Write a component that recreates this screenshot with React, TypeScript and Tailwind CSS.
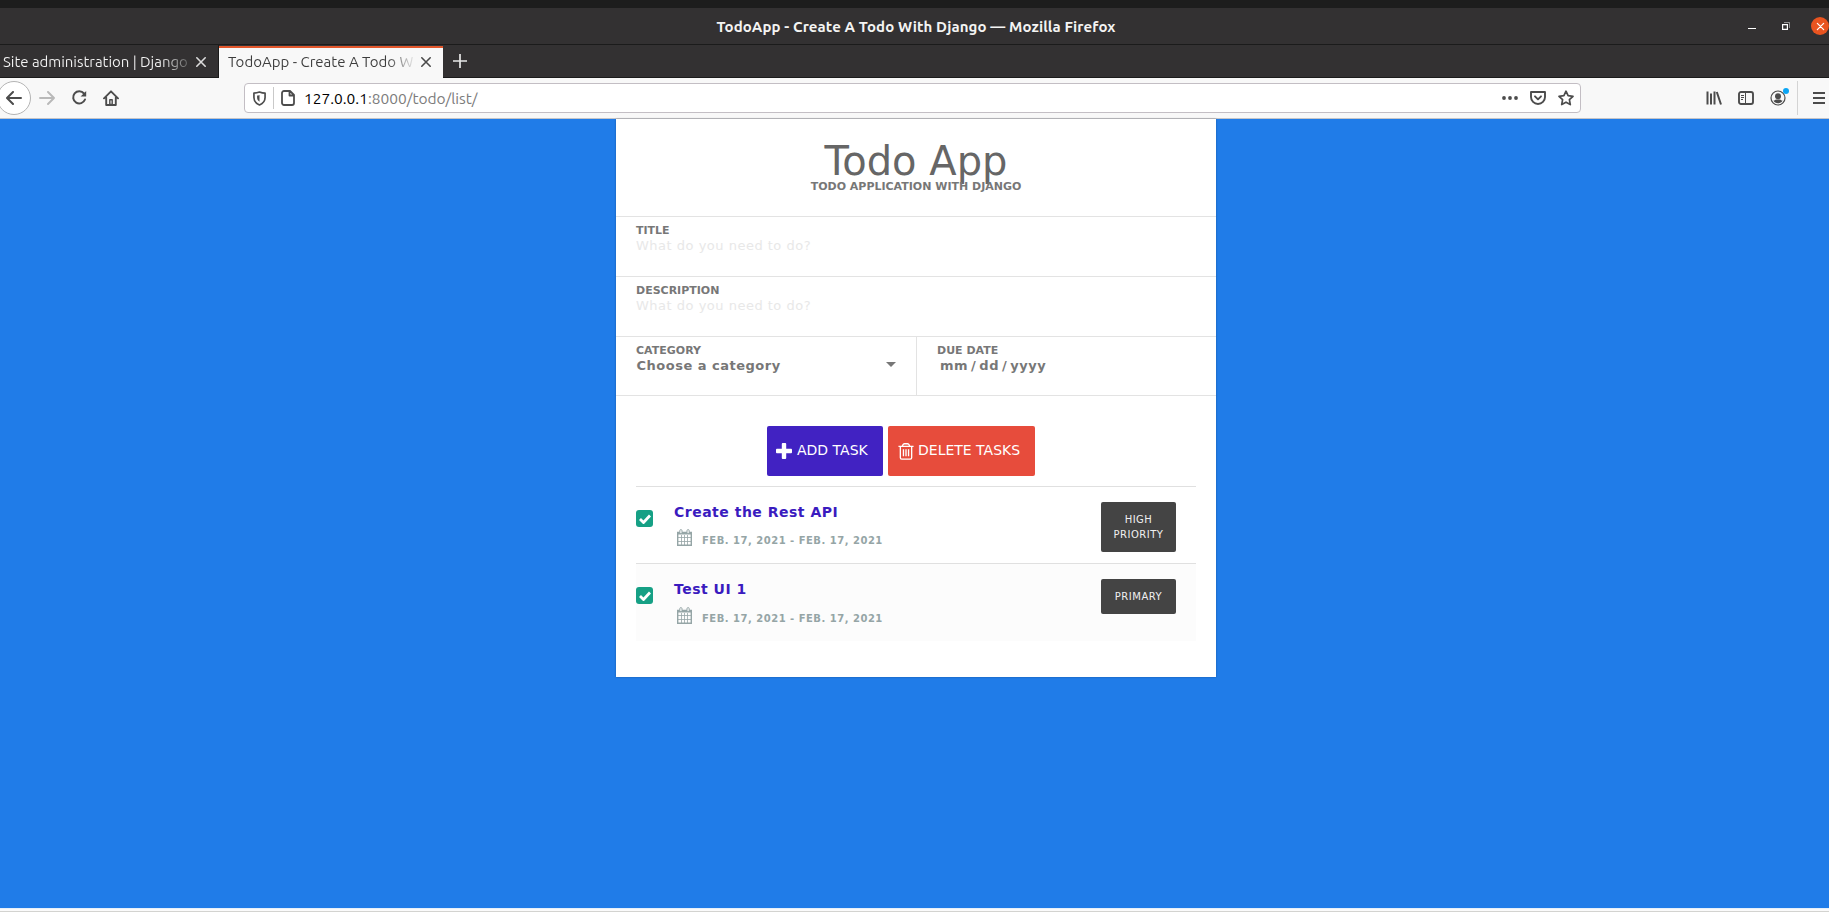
import React from 'react';

const stroke = { fill: 'none', stroke: 'currentColor' } as const;

function CloseMark({ className }: { className: string }) {
  return (
    <svg viewBox="0 0 12 12" className={className} {...stroke} strokeWidth="1.6" strokeLinecap="round">
      <path d="M1.800 1.800 10.200 10.200M10.200 1.800 1.800 10.200" />
    </svg>
  );
}

function TitleBar() {
  return (
    <header className="flex h-[37px] shrink-0 items-center border-b border-[#1b1b1b] bg-[#333132]">
      <div className="w-[150px]" />
      <h1 className="flex-1 pl-[3px] text-center text-[15px] font-bold leading-none text-[#f4f4f3]">
        <span className="inline-block whitespace-nowrap tracking-[0.1px]">TodoApp - Create A Todo With Django — Mozilla Firefox</span>
      </h1>
      <div className="flex w-[150px] items-center text-white">
        <svg viewBox="0 0 8 8" className="ml-[69px] size-2" fill="currentColor"><path d="M0 6h8v1H0z" /></svg>
        <svg viewBox="0 0 8 8" className="ml-[26px] size-2" {...stroke}>
          <path d="M.6 2.600h4.800v4.800H.6z" strokeWidth="1.200" />
          <path d="M2 .5h5.500V6" strokeWidth=".8" opacity=".6" />
        </svg>
        <span className="ml-[21px] flex size-[18px] shrink-0 items-center justify-center rounded-full bg-[#e95420]">
          <CloseMark className="size-[9px]" />
        </span>
      </div>
    </header>
  );
}

function TabBar() {
  return (
    <nav className="flex h-[33px] shrink-0 bg-[#333132] text-[15px]">
      <div className="flex w-[219px] items-center border-b border-r border-[#1b1b1b] pl-[3px] pt-[2px] text-[#f0f0f0]">
        <span className="w-[187px] whitespace-nowrap bg-gradient-to-r from-[#f4f4f4] from-85% to-[#555] bg-clip-text tracking-[-0.04px] text-transparent">
          Site administration | Django
        </span>
        <CloseMark className="ml-[5px] size-3 text-[#dcdcdc]" />
      </div>
      <div className="mt-px flex w-[224px] items-center border-t-2 border-[#e2562b] bg-[#f8f8f8] pb-[2px] pl-[9px] text-[#3d3d3d]">
        <span className="w-[186px] whitespace-nowrap bg-gradient-to-r from-[#3d3d3d] from-85% to-[#e8e8e8] bg-clip-text text-transparent">
          TodoApp - Create A Todo Wi
        </span>
        <CloseMark className="ml-[6px] size-3 text-[#4a4a4a]" />
      </div>
      <div className="flex flex-1 items-center border-b border-[#1b1b1b] pl-[10px] text-[#e8e8e8]">
        <svg viewBox="0 0 14 14" className="size-[14px]" {...stroke} strokeWidth="1.700"><path d="M7 0v14M0 7h14" /></svg>
      </div>
    </nav>
  );
}

function Toolbar() {
  return (
    <div className="flex h-[41px] shrink-0 items-center border-b border-[#c4c4c8] bg-[#f8f8f8] text-[#4c4c4c]">
      <span className="-ml-[3px] flex size-[34px] shrink-0 items-center justify-center rounded-full border border-[#b4b4b4] bg-white">
        <svg viewBox="0 0 16 14" className="h-[14px] w-4" {...stroke} strokeWidth="2" strokeLinecap="round" strokeLinejoin="round">
          <path d="M15 7H1.500M7 1 1 7l6 6" />
        </svg>
      </span>
      <svg viewBox="0 0 16 14" className="ml-2 h-[14px] w-4 text-[#b9b9b9]" {...stroke} strokeWidth="1.900" strokeLinecap="round" strokeLinejoin="round">
        <path d="M1 7h13.500M9 1l6 6-6 6" />
      </svg>
      <svg viewBox="0 0 16 16" className="ml-[16px] size-4" {...stroke} strokeWidth="2">
        <path d="M13 3.500A6.100 6.100 0 1 0 14 9.500" strokeLinecap="round" />
        <path d="M15.200 1v5.600H9.600z" fill="currentColor" stroke="none" />
      </svg>
      <svg viewBox="0 0 16 16" className="ml-4 size-4" {...stroke} strokeWidth="1.900" strokeLinejoin="round" strokeLinecap="round">
        <path d="M1 8.300 8 1.300l7 7M3.200 7.500V15h9.600V7.500" />
        <path d="M6.800 14.500V9.800h2.400v4.700z" strokeWidth="1.400" />
      </svg>
      <div className="ml-[125px] flex h-[30px] w-[1337px] shrink-0 items-center rounded-[4px] border border-[#c3bec4] bg-white">
        <svg viewBox="0 0 14 16" className="ml-2 h-[15px] w-[13px]" {...stroke} strokeWidth="1.800" strokeLinejoin="round">
          <path d="M7 1c2 .8 4 1.200 6 1.200V7c0 4-2.500 6.500-6 8-3.500-1.500-6-4-6-8V2.200C3 2.200 5 1.800 7 1z" />
          <path d="M7 4.300c-1 .4-1.800.5-2.600.6V7c0 2 .8 3.400 2.600 4.500z" fill="currentColor" stroke="none" />
        </svg>
        <span className="ml-[7px] h-[22px] w-px bg-[#c9c9c9]" />
        <svg viewBox="0 0 14 16" className="ml-[7px] h-4 w-[14px]" {...stroke} strokeWidth="1.800" strokeLinejoin="round">
          <path d="M3 1h6l4 4v8a2 2 0 0 1-2 2H3a2 2 0 0 1-2-2V3a2 2 0 0 1 2-2zM8.500 1.200v4.300h4.300" />
        </svg>
        <span className="ml-[9px] flex-1 whitespace-nowrap pt-px text-[15.5px] text-[#7c7c7c]"><span className="text-black">127.0.0.1</span>:8000/todo/list/</span>
        <svg viewBox="0 0 16 4" className="h-1 w-4" fill="currentColor"><circle cx="2" cy="2" r="1.900" /><circle cx="8" cy="2" r="1.900" /><circle cx="14" cy="2" r="1.900" /></svg>
        <svg viewBox="0 0 16 14" className="ml-3 h-[14px] w-4" {...stroke} strokeWidth="1.900" strokeLinecap="round" strokeLinejoin="round">
          <path d="M1 1h14v5a7 7 0 0 1-14 0zM5 5.300l3 3 3-3" />
        </svg>
        <svg viewBox="0 0 16 16" className="ml-3 mr-[6px] size-4" {...stroke} strokeWidth="1.700" strokeLinejoin="round">
          <path d="M8 1.200l2.100 4.500 4.900.6-3.600 3.400.9 4.900L8 12.200l-4.300 2.400.9-4.900L1 6.300l4.900-.6z" />
        </svg>
      </div>
      <svg viewBox="0 0 16 16" className="ml-[125px] size-4" {...stroke} strokeWidth="2">
        <path d="M1.500 1.500v13M5 3.500v11M8.500 1.500v13M10.800 2 15 14.500" />
      </svg>
      <svg viewBox="0 0 16 14" className="ml-4 h-[14px] w-4" {...stroke}>
        <rect x="1" y="1" width="14" height="12" rx="2" strokeWidth="1.900" />
        <path d="M7.500 1v12M3 4.500h3M3 6.500h3M3 8.500h2" />
      </svg>
      <span className="relative ml-4 size-4">
        <svg viewBox="0 0 16 16" className="size-4">
          <circle cx="8" cy="8" r="7" {...stroke} strokeWidth="1.200" />
          <circle cx="8" cy="6.200" r="3" fill="currentColor" />
          <path d="M3.500 10.500c1 .2 2-.8 2.500-1h4c.5.200 1.500 1.200 2.500 1-1 3.600-8 3.600-9 0z" fill="currentColor" />
        </svg>
        <i className="absolute -right-[3px] -top-[2px] size-[6px] rounded-full bg-[#0aa5f5]" />
      </span>
      <span className="ml-[11px] h-[34px] w-px bg-[#d4d4d4]" />
      <svg viewBox="0 0 12 12" className="ml-[15px] h-3 w-3 shrink-0" {...stroke} strokeWidth="2"><path d="M0 1h12M0 6h12M0 11h12" /></svg>
    </div>
  );
}

function TextField({ label }: { label: string }) {
  return (
    <label className="flex h-[60px] flex-col border-t border-[#e3e3e3] px-5 pt-[7px]">
      <span className="text-[11px] font-bold leading-[13px] text-[#777]">{label}</span>
      <input className="h-[18px] w-full text-[13px] tracking-[0.5px] outline-none placeholder:text-[#e8e8e8]" placeholder="What do you need to do?" />
    </label>
  );
}

function CalendarIcon() {
  return (
    <svg viewBox="0 0 15 17" className="-mt-px h-[17px] w-[15px]" {...stroke}>
      <path d="M.7 3.500h13.600v12.800H.7z" strokeWidth="1.400" />
      <path d="M1 8.500h13M1 12.500h13M4.500 6v10M7.500 6v10M10.500 6v10" strokeWidth=".8" />
      <path d="M.5 3.500h14V5H.5z" fill="currentColor" />
      <rect x="2.800" y=".6" width="2.200" height="4" rx="1.100" fill="white" />
      <rect x="10" y=".6" width="2.200" height="4" rx="1.100" fill="white" />
    </svg>
  );
}

type TaskProps = { title: string; badge: string; className: string; dateClass: string };

function Task({ title, badge, className, dateClass }: TaskProps) {
  return (
    <li className={'flex items-start border-t border-[#e0e0e0] ' + className}>
      <span className="mt-[23px] flex h-[17px] w-[17px] items-center justify-center rounded-[3px] bg-[#16a085]">
        <svg viewBox="0 0 12 10" className="h-[10px] w-3 text-white" {...stroke} strokeWidth="2.800"><path d="m1 5 3.500 3.500L11 1.500" /></svg>
      </span>
      <div className="ml-[21px] flex-1">
        <h3 className="mt-[15px] text-[14px] font-bold leading-5 tracking-[0.5px] text-[#3a1bbf]">{title}</h3>
        <p className={'flex items-start pl-[3px] text-[#95a5a6] ' + dateClass}>
          <CalendarIcon />
          <span className="ml-[10px] mt-[3px] text-[10px] font-bold leading-4 tracking-[0.5px]">FEB. 17, 2021 - FEB. 17, 2021</span>
        </p>
      </div>
      <span className="mr-5 mt-[15px] w-[75px] rounded-[2px] bg-[#444] px-2 py-[10px] text-center text-[10px] leading-[15px] tracking-[0.5px] text-[#f0f0f0]">{badge}</span>
    </li>
  );
}

function TodoCard() {
  return (
    <main className="flex h-[558px] w-[600px] flex-col bg-white shadow-[0_0_2px_rgba(0,0,0,0.3)] [font-family:'DejaVu_Sans',sans-serif]">
      <div className="h-[97px] pt-[22px] text-center">
        <h2 className="h-[39px] text-[40px] leading-10 text-[#666]">Todo App</h2>
        <p className="text-[11px] font-bold leading-[13px] text-[#777]">TODO APPLICATION WITH DJANGO</p>
      </div>
      <TextField label="TITLE" />
      <TextField label="DESCRIPTION" />
      <div className="flex h-[60px] border-y border-[#e3e3e3] font-bold text-[#777]">
        <div className="w-[301px] border-r border-[#e3e3e3] pl-5 pt-[7px]">
          <div className="text-[11px] leading-[13px]">CATEGORY</div>
          <div className="flex items-center justify-between pl-[0.5px] pr-5 text-[13px] leading-[18px] tracking-[0.5px]">
            Choose a category
            <svg viewBox="0 0 10 5" className="-mt-[4px] h-[5px] w-[10px]" fill="currentColor"><path d="M0 0h10L5 5z" /></svg>
          </div>
        </div>
        <div className="flex-1 pl-5 pt-[7px]">
          <div className="text-[11px] leading-[13px]">DUE DATE</div>
          <div className="pl-[3px] text-[13px] leading-[18px] tracking-[0.5px]">mm<span className="px-[3px]">/</span>dd<span className="px-[3px]">/</span>yyyy</div>
        </div>
      </div>
      <div className="flex h-[90px] gap-[5px] pl-[151px] pt-[30px] text-[14px] text-white">
        <button className="flex h-[50px] w-[116px] items-center whitespace-nowrap rounded-[2px] bg-[#4122c2] pb-px pl-[9px]">
          <svg viewBox="0 0 16 16" className="mr-[5px] size-4" fill="currentColor">
            <path d="M6.700 0h2.600a.9.9 0 0 1 .9.900v4.900h4.900a.9.9 0 0 1 .9.900v2.600a.9.9 0 0 1-.9.900h-4.900v4.900a.9.9 0 0 1-.9.900H6.700a.9.9 0 0 1-.9-.9v-4.900H.9a.9.9 0 0 1-.9-.9V6.700a.9.9 0 0 1 .9-.9h4.900V.9a.9.9 0 0 1 .9-.9z" />
          </svg>
          ADD TASK
        </button>
        <button className="flex h-[50px] w-[147px] items-center whitespace-nowrap rounded-[2px] bg-[#e74c3c] pb-px pl-[10px]">
          <svg viewBox="0 0 16 18" className="mr-[4px] mt-px h-[17px] w-4" {...stroke} strokeWidth="1.400">
            <path d="M0 3.500h16M4 3.500l.6-1.500q.5-1.200 1.800-1.200h3.200q1.300 0 1.800 1.200l.6 1.500M2 3.500v12q0 1.500 1.500 1.500h9q1.500 0 1.500-1.500v-12M5.300 6.500v7.500M8 6.500v7.500M10.700 6.500v7.500" />
          </svg>
          DELETE TASKS
        </button>
      </div>
      <ul className="px-5">
        <Task title="Create the Rest API" badge="HIGH PRIORITY" className="h-[77px]" dateClass="mt-[8px]" />
        <Task title="Test UI 1" badge="PRIMARY" className="h-[78px] bg-[#fcfcfc]" dateClass="mt-[9px]" />
      </ul>
    </main>
  );
}

export default function App() {
  return (
    <div className="flex h-screen w-full flex-col overflow-hidden bg-[#207ce8] [font-family:Ubuntu,'Noto_Sans',sans-serif]">
      <div className="h-[8px] shrink-0 bg-[#1d1d1d]" />
      <TitleBar />
      <TabBar />
      <Toolbar />
      <div className="flex flex-1 justify-center pl-[3px]"><TodoCard /></div>
      <div className="h-1 shrink-0 border-b border-t border-b-[#d3d3d0] border-t-[#e5f0fb] bg-[#fafafa]" />
    </div>
  );
}
